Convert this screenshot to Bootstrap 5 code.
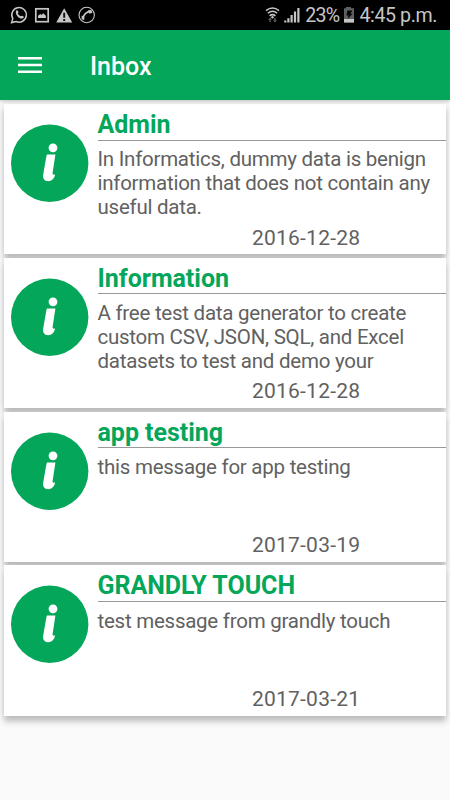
<!DOCTYPE html>
<html lang="en">
<head>
<meta charset="utf-8">
<meta name="viewport" content="width=device-width, initial-scale=1">
<title>Inbox</title>
<link href="https://cdn.jsdelivr.net/npm/bootstrap@5.3.0/dist/css/bootstrap.min.css" rel="stylesheet">
<style>
body{font-family:Roboto,"Noto Sans",sans-serif;background:#fafafa;height:800px;overflow:hidden}
.status{height:30px;background:#000;color:#c6c6c6;font-size:19.6px;line-height:30px;padding:1px 13px 0 10px}
.status span{padding-top:1px}
.charge{letter-spacing:-.7px}
.clock{letter-spacing:-.4px}
.appbar{height:70px;background:#04a65a;padding:0 18px;box-shadow:0 1px 4px rgba(0,0,0,.25);z-index:2}
.appbar h1{font-size:25px;font-weight:500;margin-left:48px;line-height:30px;padding-top:3px}
.inbox{padding:4px 4px 0;gap:3.5px}
.message{height:150.3px;border:0;border-radius:0;box-shadow:0 6px 6px rgba(0,0,0,.2),0 1px 7px rgba(0,0,0,.1);padding-left:7px}
.info{width:78px;height:78px;margin-top:20px}
.detail{margin-left:8.5px}
.subject{font-size:25px;line-height:30px;font-weight:700;color:#04a65a;height:36.7px;padding-top:6px;border-bottom:1px solid #999;letter-spacing:-.03px}
.preview{font-size:20.5px;line-height:23.8px;color:#616161;height:84px;padding-top:7.5px;letter-spacing:-.25px}
.sent{font-size:21px;line-height:26px;color:#616161;margin-left:154.5px;letter-spacing:.22px}
</style>
<script src="https://cdn.jsdelivr.net/npm/bootstrap@5.3.0/dist/js/bootstrap.bundle.min.js"></script>
</head>
<body class="d-flex flex-column">
<svg class="d-none">
<symbol id="info" viewBox="0 0 78 78"><circle cx="38.7" cy="39.2" r="38.7" fill="#04a65a"/><circle cx="42" cy="23.8" r="4.4" fill="#fff"/><path d="M35.9 30.6h8.5L41.6 49c-.2 1.4.4 1.9 2.5 1.5-.9 4.6-3.8 6.8-7 6.7-3.8-.1-5.6-2.8-4.9-6.7l2.7-15.6c.2-1.6.7-2.9 1-4.3z" fill="#fff"/></symbol>
</svg>
<div class="status d-flex align-items-center flex-shrink-0">
<svg width="90" height="30" viewBox="10 1 90 30" fill="none" stroke="#c6c6c6">
<path d="M11.6 22.6l1.2-4A7.3 7.3 0 1 1 16 21.5z" stroke-width="1.5"/>
<path d="M16.2 10.7c.9-.8 1.7-.4 2.2 1.2.2.7-.7 1.1-.5 1.6.7 1.3 1.7 2.3 3 2.8.5.1 1-.9 1.5-.6 1.5.7 1.7 1.2 1.1 2-3 3.2-9.3-3.2-7.3-7z" fill="#c6c6c6" stroke="none"/>
<rect x="35.8" y="8.8" width="12.4" height="12.9" stroke-width="1.7"/>
<path d="M38 18v-2.2l2.3-1.8 1.4 1 1.5-1.7 2.7 2.4V18z" fill="#c6c6c6" stroke="none"/>
<path d="M64.2 8.3L72.2 22.6h-16z" fill="#c6c6c6" stroke="none"/><path d="M64.2 12.8v5M64.2 19v2" stroke="#111" stroke-width="1.9"/>
<circle cx="86.7" cy="15" r="7.7" stroke-width="1.1"/>
<path d="M90.8 11.3c-3.4-.2-7.7 3.2-8 7.6" stroke-width="1.7"/><path d="M88 10.3l3.4-.3 1 2.8-3 .9zM81.6 15.8l2.8.7-.2 3.4-2.6-.6z" fill="#c6c6c6" stroke="none"/>
</svg>
<svg class="ms-auto me-1" width="38" height="30" viewBox="263 1 38 30" fill="none" stroke="#c6c6c6" stroke-width="1.5">
<path d="M266 10.6q6.5-5.2 13 0M267.8 13.2q4.7-4 9.4 0M269.6 15.8q2.9-2.4 5.8 0"/><circle cx="272.5" cy="17.3" r="1.2" fill="#c6c6c6" stroke="none"/>
<path d="M270 22v-4M275 18v4" stroke="#555"/><path d="M268 19.8l2-2.2 2 2.2zM273 20.2l2 2.4 2-2.4z" fill="#555" stroke="none"/>
<path d="M285.3 20.6v2M288.4 18.3v4.3M291.6 15v7.6M295 11.5v11.1M298.4 8v14.6" stroke-width="2.2"/>
</svg>
<span class="charge">23%</span>
<svg width="12" height="30" viewBox="343 1 12 30" class="ms-1"><path d="M346 7h5v1.3h3v14.2h-10V8.3h2z" fill="#606060"/><path d="M344 19h10v3.5h-10z" fill="#c6c6c6"/><path d="M347.4 10.5h5l-2 3.2h2.2l-5 5.3 1-3.6h-2.2z" fill="#050505"/></svg>
<span class="clock ms-1">4:45 p.m.</span>
</div>
<header class="appbar d-flex align-items-center flex-shrink-0 position-relative text-white">
<svg width="24" height="18" viewBox="0 0 24 18" fill="#fff"><path d="M0 1h24v2.6H0zM0 7.7h24v2.6H0zM0 14.4h24V17H0z"/></svg>
<h1 class="mb-0">Inbox</h1>
</header>
<main class="inbox d-flex flex-column">
<article class="message card flex-row"><svg class="info flex-shrink-0"><use href="#info"/></svg><div class="detail flex-grow-1"><h2 class="subject mb-0">Admin</h2><p class="preview mb-0">In Informatics, dummy data is benign<br>information that does not contain any<br>useful data.</p><time class="sent d-block">2016-12-28</time></div></article>
<article class="message card flex-row"><svg class="info flex-shrink-0"><use href="#info"/></svg><div class="detail flex-grow-1"><h2 class="subject mb-0">Information</h2><p class="preview mb-0">A free test data generator to create<br>custom CSV, JSON, SQL, and Excel<br>datasets to test and demo your</p><time class="sent d-block">2016-12-28</time></div></article>
<article class="message card flex-row"><svg class="info flex-shrink-0"><use href="#info"/></svg><div class="detail flex-grow-1"><h2 class="subject mb-0">app testing</h2><p class="preview mb-0">this message for app testing</p><time class="sent d-block">2017-03-19</time></div></article>
<article class="message card flex-row"><svg class="info flex-shrink-0"><use href="#info"/></svg><div class="detail flex-grow-1"><h2 class="subject mb-0">GRANDLY TOUCH</h2><p class="preview mb-0">test message from grandly touch</p><time class="sent d-block">2017-03-21</time></div></article>
</main>
</body>
</html>
